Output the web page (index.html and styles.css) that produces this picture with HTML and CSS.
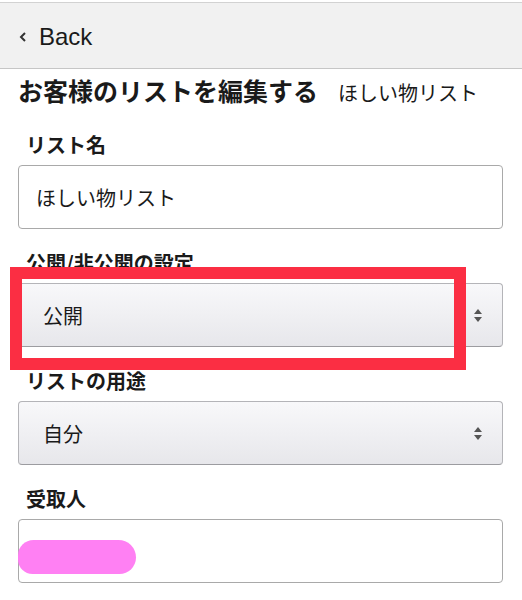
FILE: index.html
```html
<!DOCTYPE html>
<html lang="ja">
<head>
<meta charset="utf-8">
<link rel="stylesheet" href="styles.css">
</head>
<body>
<header class="topbar">
  <a class="back">
    <svg class="chev" width="8" height="10" viewBox="0 0 8 10"><polyline points="6,1 2,5 6,9" fill="none" stroke="#333" stroke-width="2"/></svg>
    <span>Back</span>
  </a>
</header>
<main class="content">
  <h1 class="title">お客様のリストを編集する<span class="sub">ほしい物リスト</span></h1>
  <div class="group">
    <div class="label">リスト名</div>
    <div class="field input">ほしい物リスト</div>
  </div>
  <div class="group">
    <div class="label">公開/非公開の設定</div>
    <div class="field select"><span>公開</span><span class="arrows"></span></div>
    <div class="highlight"></div>
  </div>
  <div class="group">
    <div class="label">リストの用途</div>
    <div class="field select"><span>自分</span><span class="arrows"></span></div>
  </div>
  <div class="group">
    <div class="label">受取人</div>
    <div class="field input"><span class="blot"></span></div>
  </div>
</main>
</body>
</html>
```
FILE: styles.css
```css
* { box-sizing: border-box; }
html, body { margin: 0; padding: 0; background: #fff; }
body {
  padding-top: 2px;
  font-family: "Noto Sans CJK JP", "Liberation Sans", sans-serif;
  color: #1a1a1a;
  overflow: hidden;
}
.topbar {
  height: 67px;
  background: #f1f1f1;
  border-top: 1px solid #d2d2d2;
  border-bottom: 1px solid #c6c6c6;
  display: flex;
  align-items: center;
  padding-left: 19px;
}
.back {
  display: flex;
  align-items: center;
  gap: 12px;
  font-family: "Liberation Sans", Arial, sans-serif;
  font-size: 24px;
  color: #1a1a1a;
  padding-top: 2px;
}
.chev { display: block; }
.content {
  padding: 0 19px 0 18px;
}
.title {
  margin: 6px 0 0 0;
  font-size: 25px;
  line-height: 30px;
  font-weight: 700;
  white-space: nowrap;
}
.sub {
  font-size: 20px;
  font-weight: 400;
  margin-left: 20px;
}
.group {
  position: relative;
  margin-top: 22px;
}
.group:first-of-type { margin-top: 25px; }
.label {
  font-size: 20px;
  line-height: 24px;
  font-weight: 700;
  padding-left: 8px;
  margin-bottom: 8px;
}
.field {
  position: relative;
  height: 64px;
  display: flex;
  align-items: center;
  font-size: 20px;
  border-radius: 4px;
}
.input {
  border: 1.5px solid #a9a9a9;
  background: #fff;
  padding-left: 17px;
}
.select {
  border: 1px solid #b4b4b8;
  border-bottom-color: #9c9ca0;
  background: linear-gradient(#f8f8fa, #e7e7eb);
  padding-left: 24px;
  justify-content: space-between;
  padding-right: 20px;
}
.arrows {
  display: flex;
  flex-direction: column;
  gap: 3px;
}
.arrows::before, .arrows::after {
  content: "";
  display: block;
  width: 0; height: 0;
  border-left: 4.5px solid transparent;
  border-right: 4.5px solid transparent;
}
.arrows::before { border-bottom: 5px solid #555; }
.arrows::after { border-top: 5px solid #555; }
.highlight {
  position: absolute;
  left: -8px;
  top: 16px;
  width: 456px;
  height: 103px;
  border: 12px solid #fb2e43;
}
.blot {
  position: absolute;
  left: -1px;
  top: 20px;
  width: 118px;
  height: 34px;
  border-radius: 16px 18px 17px 15px;
  background: #ff80f3;
}
```
